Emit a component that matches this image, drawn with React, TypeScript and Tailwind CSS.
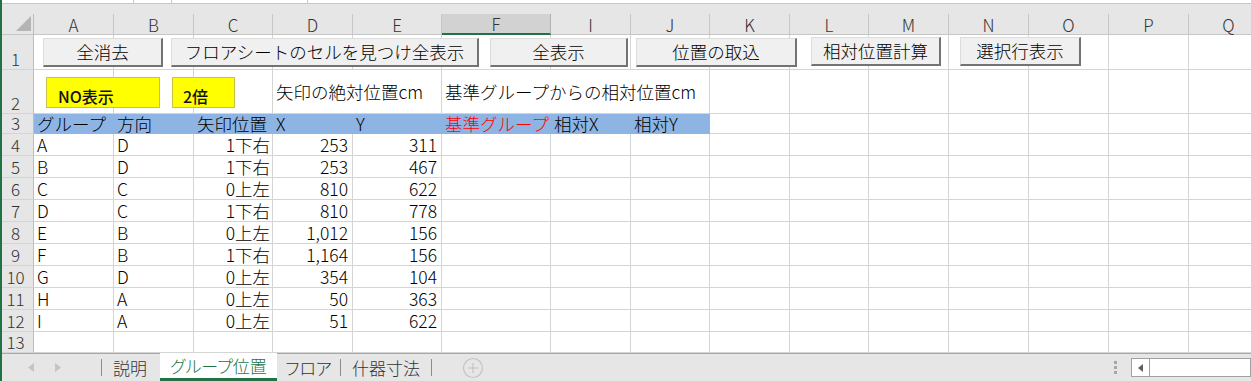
import React from "react";

const colNames = ["A", "B", "C", "D", "E", "F", "I", "J", "K", "L", "M", "N", "O", "P", "Q"];

const data: string[][] = [
  ["A", "D", "1下右", "253", "311"],
  ["B", "D", "1下右", "253", "467"],
  ["C", "C", "0上左", "810", "622"],
  ["D", "C", "1下右", "810", "778"],
  ["E", "B", "0上左", "1,012", "156"],
  ["F", "B", "1下右", "1,164", "156"],
  ["G", "D", "0上左", "354", "104"],
  ["H", "A", "0上左", "50", "363"],
  ["I", "A", "0上左", "51", "622"],
];

function RowHead({ n }: { n: number }) {
  return (
    <div className="flex items-end justify-center bg-[#e6e6e6] border-r border-b border-r-[#bdbdbd] border-b-[#d4d4d4] text-[17px] leading-[18px] text-[#333] pr-[2px] pb-[1px]">
      {n}
    </div>
  );
}

function Cell({ children, className = "" }: { children?: React.ReactNode; className?: string }) {
  return (
    <div className={"flex items-end bg-white border-r border-b border-[#d4d4d4] text-[17.5px] leading-[18px] pb-[1px] whitespace-nowrap " + className}>
      {children}
    </div>
  );
}

function WideCell({ children, span }: { children?: React.ReactNode; span: string }) {
  return (
    <div className={"flex items-center bg-white border-r border-b border-[#d4d4d4] text-[17.5px] leading-[20px] pl-[3px] whitespace-nowrap " + span}>
      {children}
    </div>
  );
}

function EmptyCells({ count }: { count: number }) {
  return (
    <>
      {Array.from({ length: count }).map((_, i) => (
        <Cell key={i} />
      ))}
    </>
  );
}

function Button({ label, className }: { label: string; className: string }) {
  return (
    <div className={"absolute flex items-center justify-center bg-[#f0f0f0] border-t border-l border-[#dcdcdc] border-r-2 border-b-2 border-r-[#737373] border-b-[#737373] text-[17.5px] leading-none text-black whitespace-nowrap " + className}>
      {label}
    </div>
  );
}

export default function App() {
  return (
    <div className="relative w-[1251px] h-[381px] overflow-hidden bg-[#e6e6e6] text-black font-light font-['Noto_Sans_CJK_JP','Noto_Sans',sans-serif]">
      {/* top strip (formula bar edge) */}
      <div className="flex h-[4px] bg-white border-b border-[#c6c6c6]">
        <div className="w-[134px] border-r border-[#c6c6c6]" />
        <div className="w-[37px]" />
        <div className="w-[137px] border-l border-r border-[#c6c6c6]" />
        <div className="flex-1" />
      </div>
      <div className="h-[10px]" />

      {/* sheet grid */}
      <div className="grid w-[1267px] grid-cols-[34px_80px_80px_79px_80px_89px_109px_80px_79px_80px_79px_80px_80px_80px_80px_80px] grid-rows-[21px_35px_44px_20px_repeat(9,22px)_21px]">
        {/* header row */}
        <div className="relative bg-[#e6e6e6] border-r border-b border-r-[#bdbdbd] border-b-[#c6c6c6]">
          <svg className="absolute right-[2px] bottom-[3px]" width="15" height="15" viewBox="0 0 15 15">
            <polygon points="15,0 15,15 0,15" fill="#b4b4b4" />
          </svg>
        </div>
        {colNames.map((c) =>
          c === "F" ? (
            <div key={c} className="flex items-center justify-center bg-[#d2d2d2] border-r border-[#b0b0b0] border-b-2 border-b-[#217346] text-[17px] leading-none text-[#333]">
              {c}
            </div>
          ) : (
            <div key={c} className="flex items-center justify-center bg-[#e6e6e6] border-r border-b border-r-[#c6c6c6] border-b-[#c6c6c6] text-[17px] leading-none text-[#333]">
              {c}
            </div>
          )
        )}

        {/* row 1 */}
        <RowHead n={1} />
        <EmptyCells count={15} />

        {/* row 2 */}
        <RowHead n={2} />
        <EmptyCells count={3} />
        <WideCell span="col-span-2">矢印の絶対位置cm</WideCell>
        <WideCell span="col-span-3">基準グループからの相対位置cm</WideCell>
        <EmptyCells count={7} />

        {/* row 3 */}
        <RowHead n={3} />
        <div className="flex items-end bg-[#8db4e2] pl-[3px] text-[17.5px] leading-[18px] pb-[1px] whitespace-nowrap">グループ</div>
        <div className="flex items-end bg-[#8db4e2] pl-[3px] text-[17.5px] leading-[18px] pb-[1px] whitespace-nowrap">方向</div>
        <div className="flex items-end bg-[#8db4e2] pl-[3px] text-[17.5px] leading-[18px] pb-[1px] whitespace-nowrap">矢印位置</div>
        <div className="flex items-end bg-[#8db4e2] pl-[3px] text-[17.5px] leading-[18px] pb-[1px] whitespace-nowrap">X</div>
        <div className="flex items-end bg-[#8db4e2] pl-[3px] text-[17.5px] leading-[18px] pb-[1px] whitespace-nowrap">Y</div>
        <div className="flex items-end bg-[#8db4e2] pl-[3px] text-[17.5px] leading-[18px] pb-[1px] whitespace-nowrap text-[#ff0000]">基準グループ</div>
        <div className="flex items-end bg-[#8db4e2] pl-[3px] text-[17.5px] leading-[18px] pb-[1px] whitespace-nowrap">相対X</div>
        <div className="flex items-end bg-[#8db4e2] pl-[3px] text-[17.5px] leading-[18px] pb-[1px] whitespace-nowrap">相対Y</div>
        <EmptyCells count={7} />

        {/* data rows */}
        {data.map((r, i) => (
          <React.Fragment key={i}>
            <RowHead n={i + 4} />
            <Cell className="pl-[3px]">{r[0]}</Cell>
            <Cell className="pl-[3px]">{r[1]}</Cell>
            <Cell className="justify-end pr-[2px]">{r[2]}</Cell>
            <Cell className="justify-end pr-[4px]">{r[3]}</Cell>
            <Cell className="justify-end pr-[4px]">{r[4]}</Cell>
            <EmptyCells count={10} />
          </React.Fragment>
        ))}

        {/* row 13 */}
        <RowHead n={13} />
        <EmptyCells count={15} />
      </div>

      {/* floating buttons */}
      <Button label="全消去" className="left-[43px] top-[38px] w-[120px] h-[29px]" />
      <Button label="フロアシートのセルを見つけ全表示" className="left-[171px] top-[38px] w-[308px] h-[29px]" />
      <Button label="全表示" className="left-[490px] top-[38px] w-[138px] h-[29px]" />
      <Button label="位置の取込" className="left-[636px] top-[38px] w-[161px] h-[29px]" />
      <Button label="相対位置計算" className="left-[811px] top-[37px] w-[130px] h-[29px]" />
      <Button label="選択行表示" className="left-[960px] top-[37px] w-[121px] h-[29px]" />

      {/* yellow shapes */}
      <div className="absolute left-[46px] top-[77px] w-[114px] h-[31px] bg-[#ffff00] border border-[#c9c24a] pl-[11px] pt-[8px] text-[16px] leading-[20px] font-medium text-[#111]">
        NO表示
      </div>
      <div className="absolute left-[172px] top-[77px] w-[63px] h-[31px] bg-[#ffff00] border border-[#c9c24a] pl-[10px] pt-[8px] text-[16px] leading-[20px] font-medium text-[#111]">
        2倍
      </div>

      {/* sheet tab bar */}
      <div className="flex h-[28px] items-stretch border-t border-[#a8a8a8] bg-[#e6e6e6] text-[17px] text-[#333] [font-feature-settings:'palt']">
        <div className="flex w-[101px] items-center">
          <svg className="ml-[28px]" width="6" height="9" viewBox="0 0 6 9">
            <polygon points="6,0 6,9 0,4.5" fill="#c4c4c4" />
          </svg>
          <svg className="ml-[21px]" width="6" height="9" viewBox="0 0 6 9">
            <polygon points="0,0 0,9 6,4.5" fill="#c4c4c4" />
          </svg>
        </div>
        <div className="my-[5px] w-px bg-[#8c8c8c]" />
        <div className="flex w-[58px] items-center pl-[11px] leading-none">説明</div>
        <div className="-mt-px flex w-[117px] items-center justify-center border-b-[3px] border-[#217346] bg-white pb-[1px] leading-none text-[#217346]">
          グループ位置
        </div>
        <div className="flex w-[63px] items-center justify-center leading-none">フロア</div>
        <div className="my-[5px] w-px bg-[#8c8c8c]" />
        <div className="flex w-[90px] items-center justify-center leading-none">什器寸法</div>
        <div className="my-[5px] w-px bg-[#8c8c8c]" />
        <div className="flex w-[82px] items-center justify-center">
          <svg width="22" height="22" viewBox="0 0 22 22">
            <circle cx="11" cy="11" r="9.5" fill="none" stroke="#c4c4c4" strokeWidth="1.2" />
            <line x1="11" y1="6" x2="11" y2="16" stroke="#c4c4c4" strokeWidth="1.2" />
            <line x1="6" y1="11" x2="16" y2="11" stroke="#c4c4c4" strokeWidth="1.2" />
          </svg>
        </div>
        <div className="flex-1" />
        <div className="mr-[14px] flex w-[3px] flex-col items-center justify-center gap-[2px]">
          <div className="h-[3px] w-[3px] bg-[#a6a6a6]" />
          <div className="h-[3px] w-[3px] bg-[#a6a6a6]" />
          <div className="h-[3px] w-[3px] bg-[#a6a6a6]" />
        </div>
        <div className="my-[4px] flex w-[120px] shrink-0 border border-[#a0a0a0] bg-white">
          <div className="flex w-[18px] items-center justify-center border-r border-[#a0a0a0]">
            <svg width="5" height="8" viewBox="0 0 5 8">
              <polygon points="5,0 5,8 0,4" fill="#5f5f5f" />
            </svg>
          </div>
        </div>
      </div>

      {/* window border */}
      <div className="absolute left-0 top-0 bottom-0 w-[2px] bg-[#217346]" />
    </div>
  );
}
